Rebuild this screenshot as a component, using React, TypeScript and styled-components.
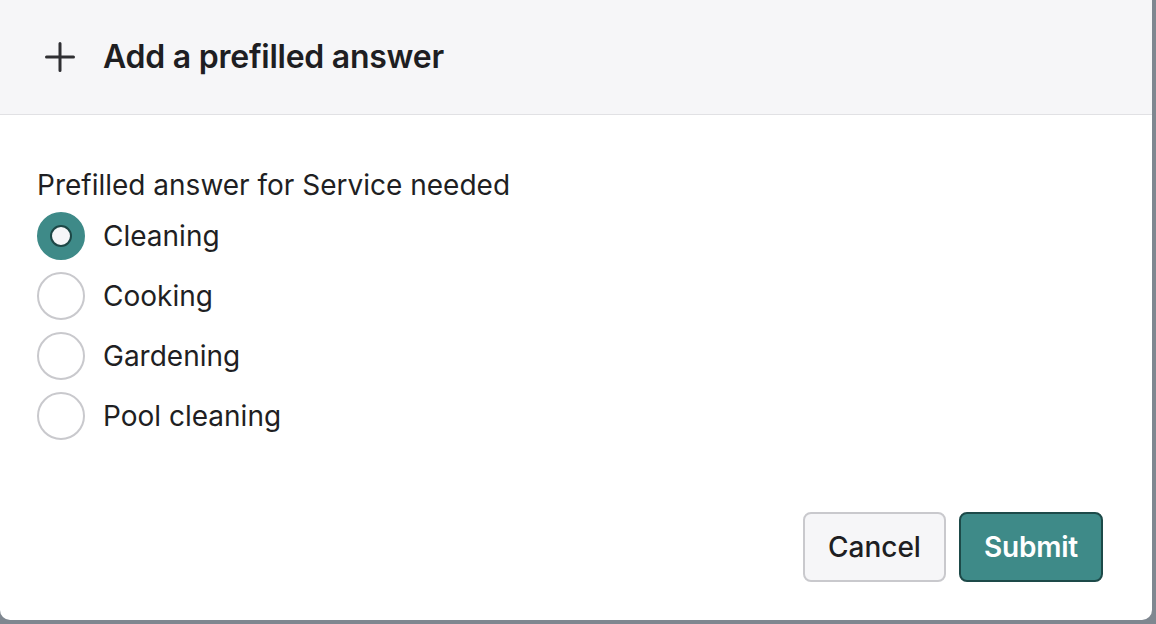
import { useState } from "react";
import styled, { createGlobalStyle } from "styled-components";

const GlobalStyle = createGlobalStyle`
  html, body {
    margin: 0;
    padding: 0;
    background: #7f8790;
    font-family: Inter, "Noto Sans", sans-serif;
    color: #1f1f23;
  }
`;

const Backdrop = styled.div`
  width: 1156px;
  height: 624px;
  background: #7f8790;
  overflow: hidden;
`;

const Modal = styled.div`
  display: flex;
  flex-direction: column;

  width: 1152px;
  height: 620px;

  background: #ffffff;
  border-radius: 0 0 10px 10px;
  overflow: hidden;
`;

const Header = styled.header`
  display: flex;
  align-items: center;
  gap: 28px;

  height: 114px;
  padding: 0 45px;

  background: #f6f6f8;
  border-bottom: 1px solid #e1e1e4;
`;

const Title = styled.h2`
  margin: 0;
  font-size: 32px;
  line-height: 38px;
  font-weight: 600;
  letter-spacing: -0.25px;
  color: #1e1e22;
`;

const Body = styled.div`
  display: flex;
  flex-direction: column;

  padding: 55px 37px 0;
`;

const Label = styled.div`
  font-size: 28px;
  line-height: 30px;
  margin-bottom: 6px;
`;

const Option = styled.label`
  display: flex;
  align-items: center;
  gap: 18px;

  height: 60px;
  font-size: 28px;
  cursor: pointer;
`;

const Radio = styled.span<{ $checked: boolean }>`
  display: flex;
  align-items: center;
  justify-content: center;
  box-sizing: border-box;

  width: 48px;
  height: 48px;
  border-radius: 50%;

  border: 2px solid ${(p) => (p.$checked ? "#3e8a88" : "#c9c9cd")};
  background: ${(p) => (p.$checked ? "#3e8a88" : "#ffffff")};

  &::after {
    content: "";
    display: ${(p) => (p.$checked ? "block" : "none")};
    box-sizing: border-box;
    width: 22px;
    height: 22px;
    border-radius: 50%;
    background: #f6f6f8;
    border: 2px solid #1d4746;
  }
`;

const Footer = styled.footer`
  display: flex;
  justify-content: flex-end;
  gap: 13px;

  margin-top: auto;
  padding: 0 49px 38px;
`;

const Button = styled.button<{ $primary?: boolean }>`
  box-sizing: border-box;
  height: 70px;
  padding: 0 23px;

  font-family: inherit;
  font-size: 28px;
  font-weight: ${(p) => (p.$primary ? 600 : 500)};
  letter-spacing: ${(p) => (p.$primary ? "-0.2px" : "0")};
  color: ${(p) => (p.$primary ? "#ffffff" : "#1e1e22")};

  background: ${(p) => (p.$primary ? "#3e8a88" : "#f6f6f8")};
  border: 2px solid ${(p) => (p.$primary ? "#1d4a49" : "#c9c9cd")};
  border-radius: 8px;
  cursor: pointer;
`;

const PlusIcon = () => (
  <svg width="30" height="30" viewBox="0 0 30 30" fill="none">
    <path
      d="M15 1.5v27M1.5 15h27"
      stroke="#2f2f33"
      strokeWidth="3"
      strokeLinecap="round"
    />
  </svg>
);

const options = ["Cleaning", "Cooking", "Gardening", "Pool cleaning"];

export default function App() {
  const [selected, setSelected] = useState("Cleaning");

  return (
    <>
      <GlobalStyle />
      <Backdrop>
        <Modal>
          <Header>
            <PlusIcon />
            <Title>Add a prefilled answer</Title>
          </Header>
          <Body>
            <Label>Prefilled answer for Service needed</Label>
            {options.map((option) => (
              <Option key={option} onClick={() => setSelected(option)}>
                <Radio $checked={selected === option} />
                {option}
              </Option>
            ))}
          </Body>
          <Footer>
            <Button>Cancel</Button>
            <Button $primary>Submit</Button>
          </Footer>
        </Modal>
      </Backdrop>
    </>
  );
}
